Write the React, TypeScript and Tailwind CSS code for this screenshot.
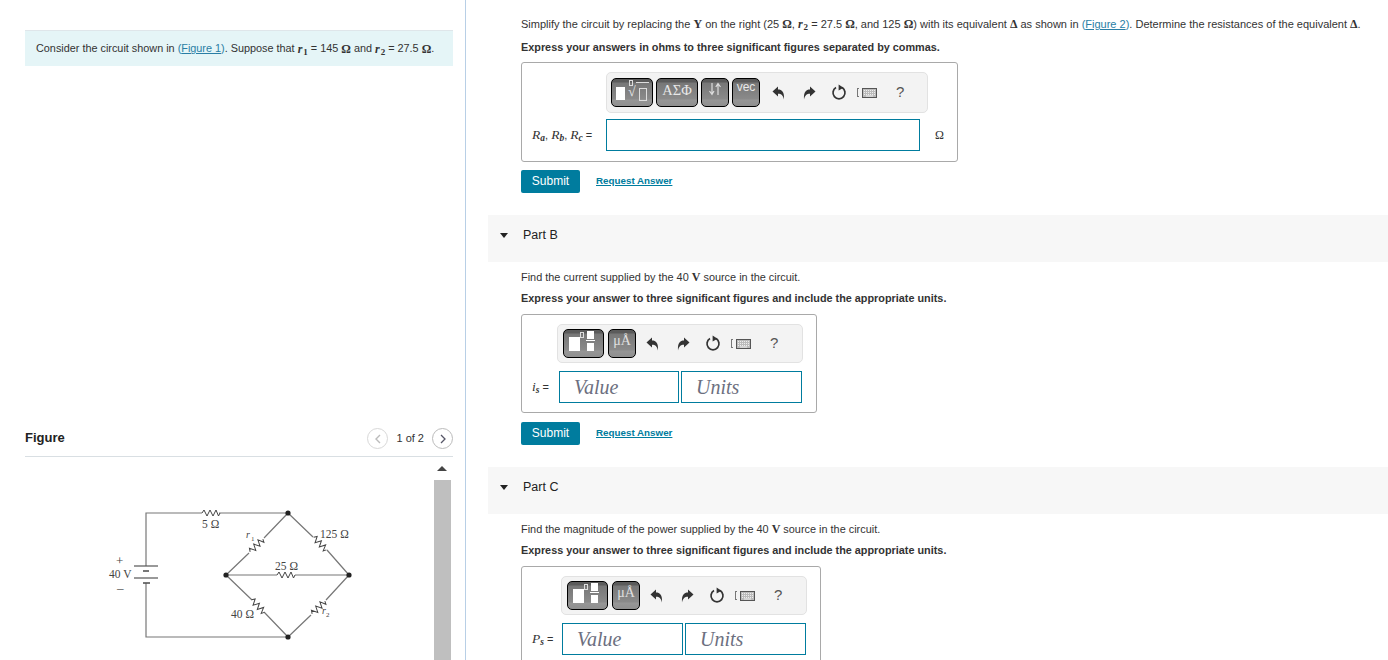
import React from "react";

const serif = "font-['Liberation_Serif',serif]";

function Sub({ children }: { children: React.ReactNode }) {
  return <span className="ml-[1px] text-[9px] align-[-2px] leading-none not-italic">{children}</span>;
}

function Undo({ flip }: { flip?: boolean }) {
  return (
    <svg width="13" height="14" viewBox="0 0 13 14" className={flip ? "-scale-x-100" : ""}>
      <path d="M0.5 5.5 L6 0.5 V3.5 C10 3.5 12.5 6 12 13.5 C11 9.5 9.5 7.8 6 7.8 V10.5 Z" fill="#333" />
    </svg>
  );
}

function Reset() {
  return (
    <svg width="16" height="17" viewBox="0 0 16 17">
      <path d="M5 3.6 A6 6 0 1 0 11 3.6" fill="none" stroke="#333" strokeWidth="1.7" />
      <path d="M7.6 0.5 L12.6 3.8 L7.6 6.4 Z" fill="#333" />
    </svg>
  );
}

function Keyboard() {
  return (
    <div className="flex items-center gap-[3px]">
      <span className="w-[2px] h-[9px] border-l border-y border-[#777]" />
      <svg width="15" height="10" viewBox="0 0 15 10">
        <rect x="0.5" y="0.5" width="14" height="9" fill="#bbb" stroke="#555" />
        <path d="M2 2.5H13M2 4.5H13M2 6.5H13" stroke="#eee" strokeWidth="1" strokeDasharray="1 1" />
        <path d="M4 8H11" stroke="#eee" />
      </svg>
    </div>
  );
}

function TBtn({ w, children }: { w: number; children: React.ReactNode }) {
  return (
    <div
      style={{ width: w }}
      className="relative h-[29px] rounded-[5px] border border-black bg-[linear-gradient(#5b5b5b,#5b5b5b_3px,#777_4px,#8a8a8a_20px,#969696_21px,#8f8f8f)] overflow-hidden text-white shrink-0"
    >
      {children}
    </div>
  );
}

function ToolIcons() {
  return (
    <div className="flex items-center">
      <Undo />
      <span className="ml-[18px]"><Undo flip /></span>
      <span className="ml-[15px] flex"><Reset /></span>
      <span className="ml-[10px]"><Keyboard /></span>
      <span className="ml-[19px] text-[15px] text-[#555] font-['Liberation_Sans',sans-serif]">?</span>
    </div>
  );
}

function Toolbar1() {
  return (
    <div className="ml-[84px] w-[322px] h-[41px] bg-[#f3f3f3] border border-[#e2e2e2] rounded-[5px] flex items-center pl-[4px] gap-[3px] shrink-0">
      <TBtn w={42}>
        <div className="absolute left-[4px] top-[8px] w-[9px] h-[13px] bg-white" />
        <span className="absolute left-[17px] top-[1px] w-[4px] h-[6px] border border-[#ddd]" />
        <span className={`absolute left-[16px] top-[5px] text-[14px] leading-[16px] text-[#e5e5e5] ${serif}`}>√</span>
        <span className="absolute left-[24px] top-[3px] w-[13px] h-px bg-[#ddd]" />
        <div className="absolute left-[27px] top-[9px] w-[8px] h-[13px] border border-[#ddd]" />
      </TBtn>
      <TBtn w={42}>
        <span className={`absolute inset-x-0 top-[3px] text-center text-[14.5px] leading-[16px] text-[#e8e8e8] ${serif}`}>ΑΣΦ</span>
      </TBtn>
      <TBtn w={28}>
        <svg className="absolute left-[6px] top-[3px]" width="14" height="14" viewBox="0 0 14 14">
          <path d="M4 1V12M1.5 9L4 12.5L6 9M10 13V2M7.8 5L10 1.5L12.5 5" fill="none" stroke="#ddd" strokeWidth="1.2" />
        </svg>
      </TBtn>
      <TBtn w={28}>
        <span className="absolute inset-x-0 top-[1px] text-center text-[12px] leading-[14px] text-[#e8e8e8] font-['Liberation_Sans',sans-serif]">vec</span>
      </TBtn>
      <div className="ml-[9px]">
        <ToolIcons />
      </div>
    </div>
  );
}

function Toolbar2({ ml }: { ml: string }) {
  return (
    <div className={`${ml} w-[246px] h-[39px] bg-[#f3f3f3] border border-[#e2e2e2] rounded-[5px] flex items-center pl-[5px] gap-[4px] shrink-0`}>
      <TBtn w={41}>
        <div className="absolute left-[5px] top-[7px] w-[11px] h-[14px] bg-white" />
        <span className="absolute left-[16px] top-[2px] w-[4px] h-[6px] border border-[#ddd]" />
        <div className="absolute left-[23px] top-[1px] w-[7px] h-[8px] bg-white" />
        <span className="absolute left-[22px] top-[10px] w-[9px] h-px bg-white" />
        <div className="absolute left-[23px] top-[13px] w-[7px] h-[8px] bg-white" />
      </TBtn>
      <TBtn w={28}>
        <span className={`absolute inset-x-0 top-[3px] text-center text-[14px] leading-[16px] text-[#e0e0e0] ${serif}`}>μÅ</span>
      </TBtn>
      <div className="ml-[6px]">
        <ToolIcons />
      </div>
    </div>
  );
}

function Actions({ mt }: { mt: string }) {
  return (
    <div className={`flex items-center h-[23px] ${mt}`}>
      <div className="w-[59px] h-[23px] bg-[#007c9e] rounded-[2px] text-white text-[12px] leading-[20px] pb-[2px] flex items-center justify-center">Submit</div>
      <span className="ml-[16px] text-[9.8px] font-bold text-[#007c9e] underline">Request Answer</span>
    </div>
  );
}

function PartBand({ label }: { label: string }) {
  return (
    <div className="h-[47px] -ml-[33px] bg-[#f7f7f7] flex items-center pb-[7px]">
      <span className="ml-[12px] w-0 h-0 border-x-[4px] border-x-transparent border-t-[5px] border-t-[#222]" />
      <span className="ml-[15px] text-[12.5px] text-[#222]">{label}</span>
    </div>
  );
}

function ValueUnits({ w1, w2 }: { w1: string; w2: string }) {
  const cls = `h-[32px] border border-[#007c9e] flex items-center pl-[14px] text-[20px] italic text-[#6c6f80] ${serif}`;
  return (
    <div className="flex gap-[2px]">
      <div className={`${cls} ${w1}`}>Value</div>
      <div className={`${cls} ${w2}`}>Units</div>
    </div>
  );
}

function MathVar({ base, sub }: { base: string; sub: string }) {
  return (
    <span className={`italic text-[#333] text-[13.5px] ${serif}`}>
      {base}
      <span className="text-[9.5px] align-[-2px] leading-none font-bold">{sub}</span>
    </span>
  );
}

function Circuit() {
  const rr = (x: number, y: number, rot: number, key: string) => (
    <path
      key={key}
      transform={`translate(${x} ${y}) rotate(${rot})`}
      d="M-9 0 L-7 -3 L-4 3 L-1 -3 L2 3 L5 -3 L7.5 3 L9 0"
      fill="none"
      stroke="#444"
      strokeWidth="1"
    />
  );
  return (
    <svg width="409" height="203" viewBox="25 457 409 203" className="shrink-0">
      <g stroke="#777" strokeWidth="1.2" fill="none">
        <path d="M146 566 V513 H202 M219 513 H288" />
        <path d="M146 583 V637 H288" />
        <path d="M226 575 L249 553 M264 538 L288 513" />
        <path d="M288 513 L313 537 M327 550 L349 575" />
        <path d="M226 575 H277 M295 575 H349" />
        <path d="M226 575 L252 600 M264 612 L288 637" />
        <path d="M288 637 L311 615 M326 600 L349 575" />
      </g>
      <g stroke="#555" fill="none">
        <path d="M134 566 H158" strokeWidth="1.2" />
        <path d="M143 571 H149" strokeWidth="1.6" />
        <path d="M134 578 H158" strokeWidth="1.2" />
        <path d="M143 583 H150" strokeWidth="1.6" />
      </g>
      {rr(211, 513, 0, "a")}
      {rr(256.5, 545.5, -45, "b")}
      {rr(320, 543.5, 45, "c")}
      {rr(286, 575, 0, "d")}
      {rr(258, 606, 45, "e")}
      {rr(318.5, 607.5, -45, "f")}
      <g fill="#222">
        <circle cx="288" cy="513" r="2.6" />
        <circle cx="226" cy="575" r="2.6" />
        <circle cx="349" cy="575" r="2.6" />
        <circle cx="288" cy="637" r="2.6" />
      </g>
      <g fontFamily="'Liberation Serif', serif" fontSize="11.5" fill="#444">
        <text x="202" y="528">5 Ω</text>
        <text x="320" y="538">125 Ω</text>
        <text x="275" y="570">25 Ω</text>
        <text x="231" y="618">40 Ω</text>
        <text x="109" y="578">40 V</text>
        <text x="116" y="565" fontSize="13">+</text>
        <text x="117" y="592" fontSize="13">–</text>
        <text x="246" y="538" fontStyle="italic" fontSize="10">r</text>
        <text x="251" y="541" fontSize="7">1</text>
        <text x="322" y="614" fontStyle="italic" fontSize="10">r</text>
        <text x="326" y="617" fontSize="7">2</text>
      </g>
    </svg>
  );
}

function Ohm() {
  return <span className={`${serif} text-[12px] font-bold`}>Ω</span>;
}

export default function App() {
  return (
    <div className="flex w-[1388px] h-[660px] overflow-hidden bg-white text-[#333] text-[11px] font-['Liberation_Sans',sans-serif]">
      {/* Left column */}
      <div className="w-[466px] shrink-0 h-full border-r border-[#b8cfe6] pl-[25px] pr-[12px] pt-[30px] flex flex-col">
        <div className="h-[36px] shrink-0 bg-[#e5f5f7] border-t border-[#dfe6ea] flex items-center pl-[11px] text-[10.85px] text-[#333] whitespace-nowrap">
          <span>Consider the circuit shown in&nbsp;</span>
          <span className="text-[#2a7ea5]">(<span className="underline">Figure 1</span>)</span>
          <span>. Suppose that&nbsp;</span>
          <span className={`italic font-bold ${serif} text-[12px]`}>r<Sub>1</Sub></span>
          <span>&nbsp;= 145&nbsp;</span><Ohm />
          <span>&nbsp;and&nbsp;</span>
          <span className={`italic font-bold ${serif} text-[12px]`}>r<Sub>2</Sub></span>
          <span>&nbsp;= 27.5&nbsp;</span><Ohm />
          <span>.</span>
        </div>
        <div className="mt-[353px] h-[38px] border-b border-[#d9dfe3] flex items-start justify-between shrink-0">
          <span className="text-[13px] font-bold text-[#222] mt-[9px]">Figure</span>
          <div className="flex items-center mt-[9px] text-[11px] text-[#333]">
            <span className="w-[21px] h-[21px] rounded-full border border-[#d8d8d8] flex items-center justify-center">
              <svg width="8" height="10" viewBox="0 0 8 10"><path d="M6 1 L2 5 L6 9" fill="none" stroke="#bbb" strokeWidth="1.4" /></svg>
            </span>
            <span className="mx-[8px]">1 of 2</span>
            <span className="w-[21px] h-[21px] rounded-full border border-[#bbb] flex items-center justify-center">
              <svg width="8" height="10" viewBox="0 0 8 10"><path d="M2 1 L6 5 L2 9" fill="none" stroke="#556" strokeWidth="1.3" /></svg>
            </span>
          </div>
        </div>
        <div className="flex">
          <Circuit />
          <div className="w-[19px] shrink-0 flex flex-col items-center">
            <span className="mt-[9px] mr-[3px] w-0 h-0 border-x-[5px] border-x-transparent border-b-[5px] border-b-[#444]" />
            <div className="mt-[9px] ml-[-2px] w-[17px] h-[200px] bg-[#bfbfbf]" />
          </div>
        </div>
      </div>

      {/* Right column */}
      <div className="flex-1 pl-[55px] pt-[17px] min-w-0">
        <p className="h-[14px] leading-[14px] text-[11px] whitespace-nowrap">
          Simplify the circuit by replacing the <b className={`${serif} text-[12px]`}>Y</b> on the right (25 <Ohm />, <b className={`italic ${serif} text-[12px]`}>r<Sub>2</Sub></b> = 27.5 <Ohm />, and 125 <Ohm />) with its equivalent <b className={`${serif} text-[12px]`}>Δ</b> as shown in <span className="text-[#2a7ea5]">(<span className="underline">Figure 2</span>)</span>. Determine the resistances of the equivalent <b className={`${serif} text-[12px]`}>Δ</b>.
        </p>
        <p className="mt-[9px] h-[14px] leading-[14px] text-[10.85px] font-bold">Express your answers in ohms to three significant figures separated by commas.</p>

        <div className="mt-[8px] w-[437px] h-[100px] border border-[#a9a9a9] rounded-[3px] pt-[9px] flex flex-col">
          <Toolbar1 />
          <div className="mt-[6px] flex items-center h-[32px]">
            <span className="ml-[10px] w-[74px] whitespace-nowrap text-[11px]">
              <MathVar base="R" sub="a" />, <MathVar base="R" sub="b" />, <MathVar base="R" sub="c" /> =
            </span>
            <div className="w-[314px] h-[32px] border border-[#007c9e]" />
            <span className={`ml-[15px] text-[12px] ${serif}`}>Ω</span>
          </div>
        </div>
        <Actions mt="mt-[8px]" />

        <div className="mt-[22px]"><PartBand label="Part B" /></div>
        <p className="mt-[8px] h-[14px] leading-[14px] text-[10.9px]">Find the current supplied by the 40 <b className={`${serif} text-[12px]`}>V</b> source in the circuit.</p>
        <p className="mt-[7px] h-[14px] leading-[14px] text-[10.85px] font-bold">Express your answer to three significant figures and include the appropriate units.</p>
        <div className="mt-[9px] w-[296px] h-[99px] border border-[#a9a9a9] rounded-[3px] pt-[9px] flex flex-col">
          <Toolbar2 ml="ml-[35px]" />
          <div className="mt-[8px] flex items-center">
            <span className="ml-[10px] w-[27px] whitespace-nowrap text-[11px]"><MathVar base="i" sub="s" /> =</span>
            <ValueUnits w1="w-[120px]" w2="w-[121px]" />
          </div>
        </div>
        <Actions mt="mt-[9px]" />

        <div className="mt-[22px]"><PartBand label="Part C" /></div>
        <p className="mt-[8px] h-[14px] leading-[14px] text-[10.9px]">Find the magnitude of the power supplied by the 40 <b className={`${serif} text-[12px]`}>V</b> source in the circuit.</p>
        <p className="mt-[7px] h-[14px] leading-[14px] text-[10.85px] font-bold">Express your answer to three significant figures and include the appropriate units.</p>
        <div className="mt-[9px] w-[300px] h-[99px] border border-[#a9a9a9] rounded-[3px] pt-[9px] flex flex-col">
          <Toolbar2 ml="ml-[39px]" />
          <div className="mt-[8px] flex items-center">
            <span className="ml-[10px] w-[30px] whitespace-nowrap text-[11px]"><MathVar base="P" sub="s" /> =</span>
            <ValueUnits w1="w-[121px]" w2="w-[121px]" />
          </div>
        </div>
      </div>
    </div>
  );
}
